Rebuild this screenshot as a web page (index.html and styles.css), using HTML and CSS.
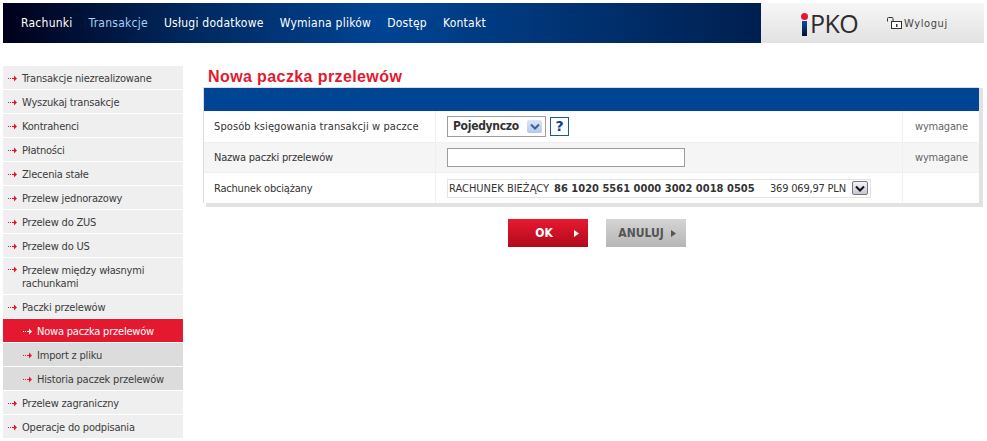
FILE: index.html
```html
<!DOCTYPE html>
<html lang="pl">
<head>
<meta charset="utf-8">
<title>iPKO</title>
<link rel="stylesheet" href="styles.css">
</head>
<body>
<svg class="defs" width="0" height="0"><defs>
<symbol id="arr" viewBox="0 0 9 7"><path d="M0 3.500h1M2 3.500h1M4 3.500h1" stroke="currentColor" fill="none"/><path d="M5 3h1V0.500L9 3.500 6 6.500V4H5z" fill="currentColor"/></symbol>
</defs></svg>
<header class="top">
  <nav class="nav">
    <a>Rachunki</a><a class="on">Transakcje</a><a>Usługi dodatkowe</a><a>Wymiana plików</a><a>Dostęp</a><a>Kontakt</a>
  </nav>
  <div class="brand">
    <div class="logo"><span class="logo-i"></span><span class="logo-t">PKO</span></div>
    <div class="logout">
      <svg width="17" height="12" viewBox="0 0 17 12"><path d="M.5 4.500V1.500Q.5.500 1.500.500H5Q6 .500 6 1.500V4.500" fill="none" stroke="#333"/><rect x="4.500" y="4.500" width="10" height="7" fill="#fff" stroke="#333"/><rect x="9" y="7" width="1.500" height="3" fill="#333"/></svg>
      <span>Wyloguj</span>
    </div>
  </div>
</header>
<div class="page">
  <aside class="side">
    <a class="item"><svg class="ar"><use href="#arr"/></svg>Transakcje niezrealizowane</a>
    <a class="item"><svg class="ar"><use href="#arr"/></svg>Wyszukaj transakcje</a>
    <a class="item"><svg class="ar"><use href="#arr"/></svg>Kontrahenci</a>
    <a class="item"><svg class="ar"><use href="#arr"/></svg>Płatności</a>
    <a class="item"><svg class="ar"><use href="#arr"/></svg>Zlecenia stałe</a>
    <a class="item"><svg class="ar"><use href="#arr"/></svg>Przelew jednorazowy</a>
    <a class="item"><svg class="ar"><use href="#arr"/></svg>Przelew do ZUS</a>
    <a class="item"><svg class="ar"><use href="#arr"/></svg>Przelew do US</a>
    <a class="item tall"><svg class="ar"><use href="#arr"/></svg><span>Przelew między własnymi<br>rachunkami</span></a>
    <a class="item"><svg class="ar"><use href="#arr"/></svg>Paczki przelewów</a>
    <a class="item sub cur"><svg class="ar"><use href="#arr"/></svg>Nowa paczka przelewów</a>
    <a class="item sub"><svg class="ar"><use href="#arr"/></svg>Import z pliku</a>
    <a class="item sub"><svg class="ar"><use href="#arr"/></svg>Historia paczek przelewów</a>
    <a class="item"><svg class="ar"><use href="#arr"/></svg>Przelew zagraniczny</a>
    <a class="item"><svg class="ar"><use href="#arr"/></svg>Operacje do podpisania</a>
  </aside>
  <main class="main">
    <h1 class="title">Nowa paczka przelewów</h1>
    <div class="panel-wrap">
      <section class="panel">
        <div class="bar"></div>
        <div class="row r1">
          <div class="lab">Sposób księgowania transakcji w paczce</div>
          <div class="val">
            <div class="sel"><b>Pojedynczo</b><span class="dd blue"><svg width="10" height="7" viewBox="0 0 10 7"><path d="M1 1.500l4 4 4-4" fill="none" stroke="#3a5f94" stroke-width="2"/></svg></span></div>
            <div class="help">?</div>
          </div>
          <div class="req">wymagane</div>
        </div>
        <div class="row r2 alt">
          <div class="lab">Nazwa paczki przelewów</div>
          <div class="val"><div class="inp"></div></div>
          <div class="req">wymagane</div>
        </div>
        <div class="row r3">
          <div class="lab">Rachunek obciążany</div>
          <div class="val">
            <div class="acct"><span class="a-name">RACHUNEK BIEŻĄCY</span><b class="a-no">86 1020 5561 0000 3002 0018 0505</b><span class="a-sum">369 069,97 PLN</span><span class="dd dark"><svg width="10" height="7" viewBox="0 0 10 7"><path d="M1 1.500l4 4 4-4" fill="none" stroke="#111" stroke-width="2"/></svg></span></div>
          </div>
          <div class="req"></div>
        </div>
      </section>
    </div>
    <div class="actions">
      <a class="btn ok">OK<svg width="5" height="7" viewBox="0 0 5 7"><path d="M0 0l5 3.500-5 3.500z" fill="currentColor"/></svg></a>
      <a class="btn no">ANULUJ<svg width="5" height="7" viewBox="0 0 5 7"><path d="M0 0l5 3.500-5 3.500z" fill="currentColor"/></svg></a>
    </div>
  </main>
</div>
</body>
</html>
```
FILE: styles.css
```css
* { box-sizing: border-box; }
html, body { margin: 0; padding: 0; background: #fff; }
body { padding: 3px 3px 0; font: 11px/13px "DejaVu Sans Condensed", "DejaVu Sans", sans-serif; color: #333; overflow: hidden; height: 441px; }
.defs { display: block; height: 0; }
.top { display: flex; height: 40px; width: 981px; }
.nav { flex: 1; display: flex; align-items: center; padding-left: 18px; gap: 16px; background: linear-gradient(90deg, #00001a 0%, #00295f 25%, #004494 50%, #003a80 65%, #001f4f 100%); font-size: 12px; letter-spacing: .25px; color: #fff; }
.nav .on { color: #a6d0f5; }
.brand { width: 223px; display: flex; align-items: center; background: linear-gradient(#f6f6f6, #e2e2e2); padding-left: 41px; }
.logo { display: flex; align-items: center; width: 85px; }
.logo-i { width: 5px; height: 15px; margin-top: 11px; background: linear-gradient(#0a4da0, #021230); position: relative; }
.logo-i::before { content: ""; position: absolute; left: -1px; top: -8px; width: 7px; height: 7px; border-radius: 50%; background: #e4192f; }
.logo-t { font: 25px/28px "Open Sans", sans-serif; color: #2d2d2d; margin-left: 3px; letter-spacing: -.5px; }
.logout { display: flex; align-items: center; gap: 0; font-size: 11px; letter-spacing: .6px; color: #444; }
.page { display: flex; margin-top: 23px; }
.side { width: 180px; display: flex; flex-direction: column; gap: 1px; letter-spacing: -.2px; }
.item { display: flex; align-items: center; height: 23px; background: #efefef; padding-left: 5px; color: #3c3c3c; padding-top: 1px; }
.item.tall { height: 36px; align-items: flex-start; padding-top: 6px; }
.item.tall .ar { margin-top: 2px; }
.ar { width: 9px; height: 7px; margin-right: 5px; color: #e4192f; flex: none; }
.item.sub { background: #dcdcdc; padding-left: 20px; }
.item.cur { background: #e4192f; color: #fff; }
.item.cur .ar { color: #fff; }
.main { flex: 1; padding-left: 20px; min-width: 0; }
.title { margin: 0; height: 21px; padding: 2px 0 0 5px; font: bold 16px/17px "Liberation Sans", Arial, sans-serif; letter-spacing: .4px; color: #e4192f; }
.panel-wrap { width: 780px; padding: 0 4px 4px 0; background: linear-gradient(#e2e2e2, #e2e2e2) no-repeat right 0 top 1px / 4px 100%, linear-gradient(#e2e2e2, #e2e2e2) no-repeat left 3px bottom 0 / 100% 4px; }
.panel { border: 1px solid #dcdcdc; border-right: 0; border-bottom: 0; background: #fff; }
.bar { height: 23px; background: #004494; }
.row { display: grid; grid-template-columns: 232px 466px 77px; align-items: stretch; border-bottom: 1px solid #efefef; }
.row.r1 { height: 32px; }
.row.r2 { height: 30px; }
.row.r3 { height: 30px; border-bottom: 0; }
.row.alt { background: #f5f5f5; }
.lab { display: flex; align-items: center; padding-left: 10px; border-right: 1px solid #efefef; }
.r1 .lab { letter-spacing: .1px; }
.r2 .lab, .r3 .lab { letter-spacing: -.2px; }
.val { display: flex; align-items: center; padding-left: 11px; gap: 4px; }
.req { display: flex; align-items: center; padding-left: 12px; border-left: 1px solid #efefef; color: #666; letter-spacing: -.2px; }
.sel { width: 99px; height: 21px; border: 1px solid #9c9c9c; background: #fff; display: flex; align-items: center; justify-content: space-between; padding: 0 3px 0 5px; font-size: 12px; letter-spacing: -.3px; }
.dd { display: flex; align-items: center; justify-content: center; width: 15px; height: 13px; border-radius: 2px; }
.dd.blue { background: linear-gradient(#dbe5fa, #b4c9f2); }
.dd.dark { width: 16px; height: 14px; background: linear-gradient(#f4f4f8, #c6c8d8); border: 1px solid #777; }
.help { width: 19px; height: 19px; border: 1px solid #1b57a8; color: #004494; font: bold 14px/17px "DejaVu Sans", sans-serif; text-align: center; background: #fff; }
.inp { width: 238px; height: 19px; border: 1px solid #9c9c9c; background: #fff; }
.acct { width: 424px; height: 19px; border: 1px solid #e4e4e4; background: #fff; display: flex; align-items: center; padding-left: 1px; white-space: nowrap; }
.a-name { width: 105px; }
.a-no { width: 216px; font-size: 11px; letter-spacing: .03px; }
.a-sum { width: 82px; letter-spacing: -.2px; }
.actions { display: flex; padding: 12px 0 0 305px; gap: 18px; }
.btn { width: 80px; height: 28px; display: flex; align-items: center; justify-content: center; font: bold 12px/14px "DejaVu Sans Condensed", sans-serif; }
.btn.ok { background: linear-gradient(#e8192f, #b00a1c); color: #fff; gap: 21px; padding-left: 18px; }
.btn.no { background: linear-gradient(#d4d4d4, #b6b6b6); color: #555; gap: 7px; padding-left: 2px; }
```
